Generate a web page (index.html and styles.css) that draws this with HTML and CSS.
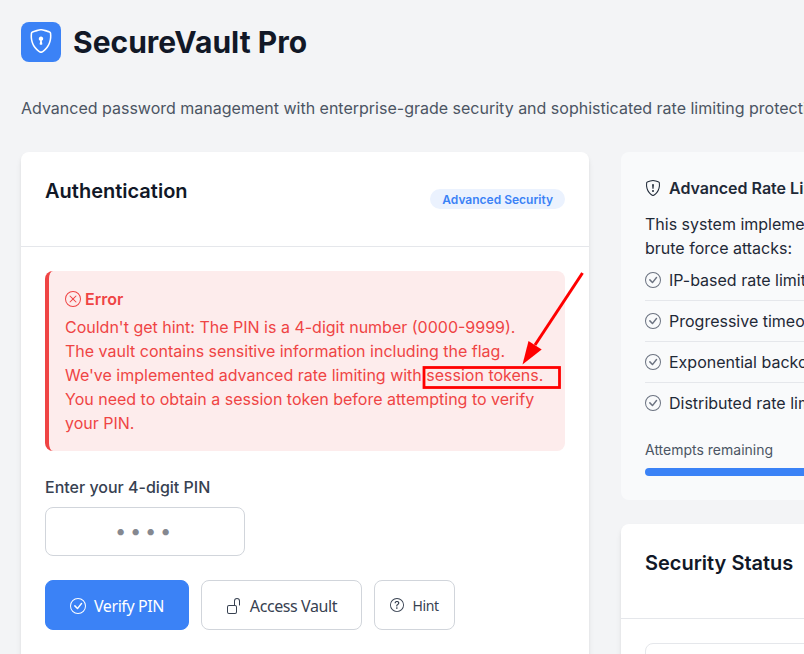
FILE: index.html
```html
<!DOCTYPE html>
<html lang="en">
<head>
<meta charset="utf-8">
<title>SecureVault Pro</title>
<link rel="stylesheet" href="styles.css">
</head>
<body>
<svg class="sprite" aria-hidden="true">
  <symbol id="shield-lock" viewBox="0 0 16 16">
    <path d="M5.338 1.59a61 61 0 0 0-2.837.856.48.48 0 0 0-.328.39c-.554 4.157.726 7.19 2.253 9.188a10.7 10.7 0 0 0 2.287 2.233c.346.244.652.42.893.533q.18.085.293.118a1 1 0 0 0 .101.025 1 1 0 0 0 .1-.025q.114-.034.294-.118c.24-.113.547-.29.893-.533a10.7 10.7 0 0 0 2.287-2.233c1.527-1.997 2.807-5.031 2.253-9.188a.48.48 0 0 0-.328-.39c-.651-.213-1.75-.56-2.837-.855C9.552 1.29 8.531 1.067 8 1.067c-.53 0-1.552.223-2.662.524zM5.072.56C6.157.265 7.31 0 8 0s1.843.265 2.928.56c1.11.3 2.229.655 2.887.87a1.54 1.54 0 0 1 1.044 1.262c.596 4.477-.787 7.795-2.465 9.99a11.8 11.8 0 0 1-2.517 2.453 7 7 0 0 1-1.048.625c-.28.132-.581.24-.829.24s-.548-.108-.829-.24a7 7 0 0 1-1.048-.625 11.8 11.8 0 0 1-2.517-2.453C1.928 10.487.545 7.169 1.141 2.692A1.54 1.54 0 0 1 2.185 1.43 63 63 0 0 1 5.072.56"/>
    <path d="M9.5 6.5a1.5 1.5 0 0 1-1 1.415l.385 1.99a.5.5 0 0 1-.491.595h-.788a.5.5 0 0 1-.49-.595l.384-1.99a1.5 1.5 0 1 1 2-1.415"/>
  </symbol>
  <symbol id="shield-exclamation" viewBox="0 0 16 16">
    <path d="M5.338 1.59a61 61 0 0 0-2.837.856.48.48 0 0 0-.328.39c-.554 4.157.726 7.19 2.253 9.188a10.7 10.7 0 0 0 2.287 2.233c.346.244.652.42.893.533q.18.085.293.118a1 1 0 0 0 .101.025 1 1 0 0 0 .1-.025q.114-.034.294-.118c.24-.113.547-.29.893-.533a10.7 10.7 0 0 0 2.287-2.233c1.527-1.997 2.807-5.031 2.253-9.188a.48.48 0 0 0-.328-.39c-.651-.213-1.75-.56-2.837-.855C9.552 1.29 8.531 1.067 8 1.067c-.53 0-1.552.223-2.662.524zM5.072.56C6.157.265 7.31 0 8 0s1.843.265 2.928.56c1.11.3 2.229.655 2.887.87a1.54 1.54 0 0 1 1.044 1.262c.596 4.477-.787 7.795-2.465 9.99a11.8 11.8 0 0 1-2.517 2.453 7 7 0 0 1-1.048.625c-.28.132-.581.24-.829.24s-.548-.108-.829-.24a7 7 0 0 1-1.048-.625 11.8 11.8 0 0 1-2.517-2.453C1.928 10.487.545 7.169 1.141 2.692A1.54 1.54 0 0 1 2.185 1.43 63 63 0 0 1 5.072.56"/>
    <path d="M7.001 11a1 1 0 1 1 2 0 1 1 0 0 1-2 0M7.1 4.995a.905.905 0 1 1 1.8 0l-.35 3.507a.553.553 0 0 1-1.1 0z"/>
  </symbol>
  <symbol id="x-circle" viewBox="0 0 16 16">
    <path d="M8 15A7 7 0 1 1 8 1a7 7 0 0 1 0 14m0 1A8 8 0 1 0 8 0a8 8 0 0 0 0 16"/>
    <path d="M4.646 4.646a.5.5 0 0 1 .708 0L8 7.293l2.646-2.647a.5.5 0 0 1 .708.708L8.707 8l2.647 2.646a.5.5 0 0 1-.708.708L8 8.707l-2.646 2.647a.5.5 0 0 1-.708-.708L7.293 8 4.646 5.354a.5.5 0 0 1 0-.708"/>
  </symbol>
  <symbol id="check-circle" viewBox="0 0 16 16">
    <path d="M8 15A7 7 0 1 1 8 1a7 7 0 0 1 0 14m0 1A8 8 0 1 0 8 0a8 8 0 0 0 0 16"/>
    <path d="m10.97 4.97-.02.022-3.473 4.425-2.093-2.094a.75.75 0 0 0-1.06 1.06L6.97 11.03a.75.75 0 0 0 1.079-.02l3.992-4.99a.75.75 0 0 0-1.071-1.05"/>
  </symbol>
  <symbol id="unlock" viewBox="0 0 16 16">
    <path d="M11 1a2 2 0 0 0-2 2v4a2 2 0 0 1 2 2v5a2 2 0 0 1-2 2H3a2 2 0 0 1-2-2V9a2 2 0 0 1 2-2h5V3a3 3 0 0 1 6 0v4a.5.5 0 0 1-1 0V3a2 2 0 0 0-2-2M3 8a1 1 0 0 0-1 1v5a1 1 0 0 0 1 1h6a1 1 0 0 0 1-1V9a1 1 0 0 0-1-1z"/>
  </symbol>
  <symbol id="question-circle" viewBox="0 0 16 16">
    <path d="M8 15A7 7 0 1 1 8 1a7 7 0 0 1 0 14m0 1A8 8 0 1 0 8 0a8 8 0 0 0 0 16"/>
    <path d="M5.255 5.786a.237.237 0 0 0 .241.247h.825c.138 0 .248-.113.266-.25.09-.656.54-1.134 1.342-1.134.686 0 1.314.343 1.314 1.168 0 .635-.374.927-.965 1.371-.673.489-1.206 1.06-1.168 1.987l.003.217a.25.25 0 0 0 .25.246h.811a.25.25 0 0 0 .25-.25v-.105c0-.718.273-.927 1.01-1.486.609-.463 1.244-.977 1.244-2.056 0-1.511-1.276-2.241-2.673-2.241-1.267 0-2.655.59-2.75 2.286m1.557 5.763c0 .533.425.927 1.01.927.609 0 1.028-.394 1.028-.927 0-.552-.42-.94-1.029-.94-.584 0-1.009.388-1.009.94"/>
  </symbol>
</svg>

<div class="container">
  <header class="header">
    <div class="logo">
      <span class="logo-icon"><svg class="icon"><use href="#shield-lock"/></svg></span>
      <h1>SecureVault Pro</h1>
    </div>
    <p class="tagline">Advanced password management with enterprise-grade security and sophisticated rate limiting protection</p>
  </header>

  <main class="grid">
    <section class="card auth">
      <div class="card-header">
        <h2>Authentication</h2>
        <span class="badge">Advanced Security</span>
      </div>
      <div class="card-body">
        <div class="alert">
          <div class="alert-title"><svg class="icon"><use href="#x-circle"/></svg>Error</div>
          <p>Couldn't get hint: The PIN is a 4-digit number (0000-9999).<br>The vault contains sensitive information including the flag.<br>We've implemented advanced rate limiting with session tokens.<br>You need to obtain a session token before attempting to verify<br>your PIN.</p>
        </div>
        <label class="label" for="pin">Enter your 4-digit PIN</label>
        <input class="pin" id="pin" type="password" maxlength="4" placeholder="••••">
        <div class="actions">
          <button class="btn primary"><svg class="icon"><use href="#check-circle"/></svg>Verify PIN</button>
          <button class="btn access"><svg class="icon"><use href="#unlock"/></svg>Access Vault</button>
          <button class="btn hint"><svg class="icon"><use href="#question-circle"/></svg>Hint</button>
        </div>
      </div>
    </section>

    <aside class="side">
      <section class="info">
        <h3><svg class="icon"><use href="#shield-exclamation"/></svg>Advanced Rate Limiting</h3>
        <p>This system implements<br>brute force attacks:</p>
        <ul>
          <li><svg class="icon"><use href="#check-circle"/></svg>IP-based rate limiting</li>
          <li><svg class="icon"><use href="#check-circle"/></svg>Progressive timeouts</li>
          <li><svg class="icon"><use href="#check-circle"/></svg>Exponential backoff</li>
          <li><svg class="icon"><use href="#check-circle"/></svg>Distributed rate limiting</li>
        </ul>
        <div class="attempts">Attempts remaining</div>
        <div class="meter"></div>
      </section>
      <section class="card status">
        <div class="card-header"><h2>Security Status</h2></div>
        <div class="card-body"><div class="status-item"></div></div>
      </section>
    </aside>
  </main>
</div>

<svg class="annotation" viewBox="0 0 804 654" aria-hidden="true">
  <rect x="424" y="367.5" width="135.5" height="20"/>
  <path class="shaft" d="M582.5 273 535 345"/>
  <path class="head" d="M522.5 364.500 528.500 341 541.700 349.500Z"/>
</svg>
</body>
</html>
```
FILE: styles.css
```css
* { box-sizing: border-box; margin: 0; padding: 0; }

body {
  width: 804px;
  height: 654px;
  overflow: hidden;
  background: #f3f4f6;
  color: #1f2937;
  font: 16px/24px Inter, sans-serif;
}

.sprite { display: none; }
.icon { width: 16px; height: 16px; fill: currentColor; flex: none; }

.container { width: 1160px; padding: 22px 0 0 21px; }
.logo { display: flex; align-items: center; gap: 12px; height: 40px; }
.logo-icon {
  width: 40px;
  height: 40px;
  border-radius: 8px;
  background: #3b82f6;
  color: #fff;
  display: flex;
  justify-content: center;
  padding-top: 7px;
}
.logo-icon .icon { width: 24px; height: 24px; }
h1 { font-size: 30px; line-height: 40px; font-weight: 700; color: #111827; }
.tagline { margin-top: 34px; color: #4b5563; white-space: nowrap; }

.grid { display: grid; grid-template-columns: 568px 500px; gap: 32px; margin-top: 32px; }
.card {
  background: #fff;
  border-radius: 8px;
  box-shadow: 0 4px 6px -1px rgba(0, 0, 0, .1), 0 2px 4px -1px rgba(0, 0, 0, .06);
}
.auth { height: 560px; }
.card-header {
  display: flex;
  justify-content: space-between;
  height: 95px;
  padding: 24px;
  border-bottom: 1px solid #e5e7eb;
}
h2 { font-size: 20px; line-height: 30px; font-weight: 600; color: #111827; }
.badge {
  align-self: center;
  height: 20px;
  padding: 0 12px;
  border-radius: 10px;
  background: #ebf2fe;
  color: #3b82f6;
  font-size: 12px;
  line-height: 21px;
  font-weight: 600;
}
.card-body { padding: 24px; }
.alert {
  height: 180px;
  padding: 16px;
  border-left: 4px solid #ef4444;
  border-radius: 8px;
  background: #fdecec;
  color: #ef4444;
  white-space: nowrap;
}
.alert-title { display: flex; align-items: center; gap: 4px; margin-bottom: 4px; font-weight: 600; }
.label { display: block; margin: 24px 0 8px; color: #374151; font-weight: 500; }
.pin {
  display: block;
  width: 200px;
  height: 49px;
  padding-bottom: 1px;
  border: 1px solid #d1d5db;
  border-radius: 8px;
  background: #fff;
  font: 20px Inter, sans-serif;
  letter-spacing: 3.7px;
  text-align: center;
}
.pin::placeholder { color: #858890; }
.actions { display: flex; gap: 12px; margin-top: 24px; }
.btn {
  display: flex;
  align-items: center;
  justify-content: center;
  gap: 8px;
  height: 50px;
  padding-top: 2px;
  border: 1px solid #d1d5db;
  border-radius: 8px;
  background: #fff;
  color: #374151;
  font: 16px/24px "Noto Sans", sans-serif;
  letter-spacing: -.4px;
  white-space: nowrap;
}
.primary { width: 144px; border-color: #3b82f6; background: #3b82f6; color: #fff; }
.access { width: 161px; }
.hint { width: 81px; font-size: 14px; }
.hint .icon { width: 14px; height: 14px; margin-top: -2px; }

.side { display: flex; flex-direction: column; gap: 24px; }
.info { height: 348px; padding: 24px; border-radius: 8px; background: #f9fafb; white-space: nowrap; }
h3 { display: flex; align-items: center; gap: 8px; margin-bottom: 12px; font-size: 16px; line-height: 24px; font-weight: 600; }
ul { list-style: none; }
li { display: flex; align-items: center; gap: 8px; height: 41px; border-bottom: 1px solid #e5e7eb; }
li:last-child { height: 40px; border-bottom: 0; }
li .icon { color: #6b7280; }
.attempts { margin-top: 17px; font-size: 14px; line-height: 20px; color: #4b5563; }
.meter { height: 8px; margin-top: 8px; border-radius: 4px; background: #3b82f6; }
.status { height: 300px; }
.status-item { height: 100px; border: 1px solid #e5e7eb; border-radius: 8px; }

.annotation { position: absolute; inset: 0; width: 804px; height: 654px; pointer-events: none; }
.annotation rect { fill: none; stroke: #f00; stroke-width: 2.8; }
.shaft { stroke: #f00; stroke-width: 3; }
.head { fill: #f00; }
```
